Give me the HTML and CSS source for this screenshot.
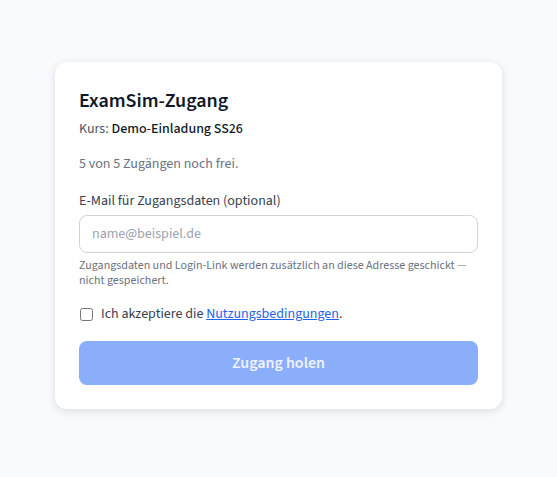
FILE: index.html
```html
<!DOCTYPE html>
<html lang="de">
<head>
    <meta charset="UTF-8">
    <meta name="viewport" content="width=device-width, initial-scale=1.0">
    <title>ExamSim-Zugang</title>
    <link rel="stylesheet" href="styles.css">
</head>
<body>
    <main class="tarjeta">
        <h1 class="titulo">ExamSim-Zugang</h1>
        <p class="kurs">Kurs: <strong>Demo-Einladung SS26</strong></p>
        <p class="frei">5 von 5 Zugängen noch frei.</p>

        <form class="formulario">
            <label class="etiqueta" for="email">E-Mail für Zugangsdaten (optional)</label>
            <input id="email" class="campo" type="email" placeholder="name@beispiel.de">
            <p class="ayuda">Zugangsdaten und Login-Link werden zusätzlich an diese Adresse geschickt — nicht gespeichert.</p>

            <label class="acepto">
                <input type="checkbox">
                <span>Ich akzeptiere die <a href="#">Nutzungsbedingungen</a>.</span>
            </label>

            <button type="button" class="boton" disabled>Zugang holen</button>
        </form>
    </main>
</body>
</html>
```

FILE: styles.css
```css
/* Base de la página */
body, html {
    margin: 0;
    padding: 0;
}

body {
    background: #f8fafc;
    font-family: "Source Sans 3", "Source Sans Pro", Lato, "Liberation Sans", sans-serif;
    color: #111827;
    padding: 62px 16px 40px;
}

/* Tarjeta central */
.tarjeta {
    max-width: 447px;
    margin: 0 auto;
    box-sizing: border-box;
    background: #fff;
    border-radius: 12px;
    box-shadow: 0 2px 8px rgba(15, 23, 42, 0.12);
    padding: 26px 24px 24px;
}

.titulo {
    margin: 0;
    font-size: 20px;
    font-weight: 600;
    line-height: 26px;
    color: #111827;
}

.kurs {
    margin: 5px 0 0;
    font-size: 14px;
    line-height: 20px;
    color: #4b5563;
}

.kurs strong {
    font-weight: 500;
    color: #111827;
}

.frei {
    margin: 15px 0 0;
    font-size: 14px;
    line-height: 20px;
    color: #6b7280;
}

.formulario {
    display: flex;
    flex-direction: column;
    margin-top: 17px;
}

.etiqueta {
    font-size: 14px;
    line-height: 20px;
    color: #374151;
}

.campo {
    margin-top: 4px;
    height: 38px;
    box-sizing: border-box;
    border: 1px solid #d1d5db;
    border-radius: 8px;
    padding: 0 12px;
    font-family: inherit;
    font-size: 14px;
    color: #111827;
    background: #fff;
}

.campo::placeholder {
    color: #9ca3af;
}

.ayuda {
    margin: 5px 0 0;
    font-size: 12px;
    line-height: 15px;
    color: #6b7280;
}

/* Casilla de aceptación */
.acepto {
    display: flex;
    align-items: center;
    gap: 8px;
    margin-top: 16px;
    font-size: 14px;
    line-height: 20px;
    color: #374151;
}

.acepto input {
    margin: 0 0 0 1px;
    width: 13px;
    height: 13px;
}

.acepto a {
    color: #2563eb;
}

/* Botón principal */
.boton {
    margin-top: 17px;
    height: 44px;
    border: none;
    border-radius: 8px;
    background: #8aaefa;
    color: #eef3ff;
    font-family: inherit;
    font-size: 16px;
    font-weight: 600;
}
```
